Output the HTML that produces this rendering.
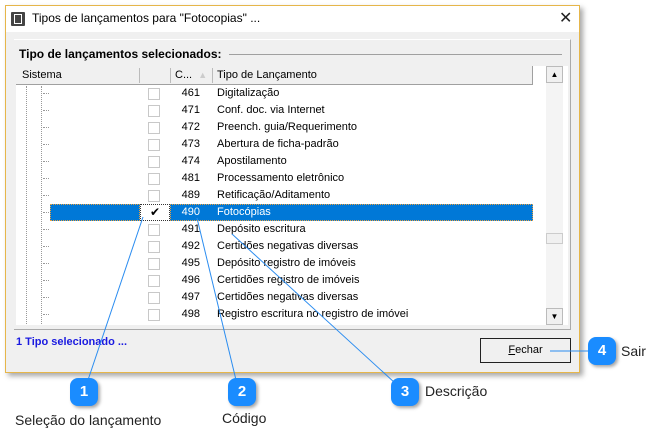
<!DOCTYPE html>
<html><head><meta charset="utf-8"><style>
*{margin:0;padding:0;box-sizing:border-box}
body{width:660px;height:444px;background:#fff;position:relative;font-family:"Liberation Sans",sans-serif;font-size:11px;color:#000;overflow:hidden}
.a{position:absolute}
.win{left:5px;top:5px;width:575px;height:368px;border:1px solid #e6b64a;background:#f0f0f0;box-shadow:3px 3px 5px rgba(0,0,0,.35)}
.tb{left:0;top:0;width:573px;height:26px;background:#fff}
.row{position:absolute;left:0;width:517px;height:17px}
.cb{position:absolute;left:132px;top:3px;width:12px;height:12px;border:1px solid #c8c8c8;background:#fff}
.code{position:absolute;left:155px;width:29px;text-align:right;top:2px}
.desc{position:absolute;left:201px;top:2px}
.tree{position:absolute;left:27px;top:8px;width:6px;border-top:1px dotted #999}
.co{position:absolute;width:28px;height:28px;border-radius:8px;background:#1a8cff;color:#fff;font-weight:bold;font-size:15px;text-align:center;line-height:28px;box-shadow:2px 2px 3px rgba(0,0,0,.35)}
.lbl{position:absolute;font-size:14px;color:#222}
</style></head><body>
<div class="a win">
 <div class="a tb">
  <div class="a" style="left:5px;top:6px;width:14px;height:14px;background:#444;border-radius:1px"><div class="a" style="left:3px;top:2px;width:8px;height:10px;border:1px solid #fff;"></div></div>
  <div class="a" style="left:26px;top:5px;font-size:12px">Tipos de lançamentos para "Fotocopias" ...</div>
  <div class="a" style="left:553px;top:2px;font-size:16px;font-weight:300;color:#222">✕</div>
 </div>
 <div class="a" style="left:8px;top:33px;width:557px;height:291px;border-right:1px solid #aaa;border-bottom:1px solid #aaa;border-top:1px solid #fff">
  <div class="a" style="left:5px;top:7px;font-weight:bold;font-size:12px">Tipo de lançamentos selecionados:</div>
  <div class="a" style="left:215px;top:14px;width:333px;border-top:1px solid #a0a0a0"></div>
  <div class="a" style="left:2px;top:26px;width:552px;height:259px;background:#fff;overflow:hidden">
   <div class="a" style="left:0;top:0;width:517px;height:19px;background:#f0f0f0;border-right:1px solid #a0a0a0;border-bottom:1px solid #a0a0a0">
    <div class="a" style="left:6px;top:3px">Sistema</div>
    <div class="a" style="left:123px;top:2px;height:15px;border-left:1px solid #bbb"></div>
    <div class="a" style="left:154px;top:2px;height:15px;border-left:1px solid #bbb"></div>
    <div class="a" style="left:159px;top:3px">C...&nbsp;&nbsp;<span style="color:#ccc;font-size:9px">▲</span></div>
    <div class="a" style="left:196px;top:2px;height:15px;border-left:1px solid #bbb"></div>
    <div class="a" style="left:201px;top:3px">Tipo de Lançamento</div>
   </div>
   <div class="a" style="left:10px;top:20px;height:240px;border-left:1px dotted #999"></div>
   <div class="a" style="left:25px;top:20px;height:240px;border-left:1px dotted #999"></div>
   <div class="a" style="left:0;top:19px;width:517px">
    <div class="row" style="top:0"><div class="tree"></div><div class="cb"></div><div class="code">461</div><div class="desc">Digitalização</div></div>
    <div class="row" style="top:17px"><div class="tree"></div><div class="cb"></div><div class="code">471</div><div class="desc">Conf. doc. via Internet</div></div>
    <div class="row" style="top:34px"><div class="tree"></div><div class="cb"></div><div class="code">472</div><div class="desc">Preench. guia/Requerimento</div></div>
    <div class="row" style="top:51px"><div class="tree"></div><div class="cb"></div><div class="code">473</div><div class="desc">Abertura de ficha-padrão</div></div>
    <div class="row" style="top:68px"><div class="tree"></div><div class="cb"></div><div class="code">474</div><div class="desc">Apostilamento</div></div>
    <div class="row" style="top:85px"><div class="tree"></div><div class="cb"></div><div class="code">481</div><div class="desc">Processamento eletrônico</div></div>
    <div class="row" style="top:102px"><div class="tree"></div><div class="cb"></div><div class="code">489</div><div class="desc">Retificação/Aditamento</div></div>
    <div class="row" style="top:119px"><div class="tree"></div>
      <div class="a" style="left:34px;top:0;width:90px;height:17px;background:#0078d7;border:1px dotted #e8a040"></div>
      <div class="a" style="left:124px;top:0;width:30px;height:17px;background:#fff;border:1px dotted #333"></div>
      <div class="a" style="left:134px;top:1px;font-size:12px">✔</div>
      <div class="a" style="left:154px;top:0;width:363px;height:17px;background:#0078d7;border:1px dotted #e8a040"></div>
      <div class="code" style="color:#fff">490</div><div class="desc" style="color:#fff">Fotocópias</div></div>
    <div class="row" style="top:136px"><div class="tree"></div><div class="cb"></div><div class="code">491</div><div class="desc">Depósito escritura</div></div>
    <div class="row" style="top:153px"><div class="tree"></div><div class="cb"></div><div class="code">492</div><div class="desc">Certidões negativas diversas</div></div>
    <div class="row" style="top:170px"><div class="tree"></div><div class="cb"></div><div class="code">495</div><div class="desc">Depósito registro de imóveis</div></div>
    <div class="row" style="top:187px"><div class="tree"></div><div class="cb"></div><div class="code">496</div><div class="desc">Certidões registro de imóveis</div></div>
    <div class="row" style="top:204px"><div class="tree"></div><div class="cb"></div><div class="code">497</div><div class="desc">Certidões negativas diversas</div></div>
    <div class="row" style="top:221px"><div class="tree"></div><div class="cb"></div><div class="code">498</div><div class="desc">Registro escritura no registro de imóvei</div></div>
   </div>
   <div class="a" style="left:530px;top:0;width:17px;height:259px;background:#f4f4f4">
    <div class="a" style="left:0;top:0;width:17px;height:17px;background:#f0f0f0;border:1px solid #bbb;font-size:8px;text-align:center;line-height:15px">▲</div>
    <div class="a" style="left:0;top:167px;width:17px;height:11px;background:#f0f0f0;border:1px solid #ccc"></div>
    <div class="a" style="left:0;top:242px;width:17px;height:17px;background:#f0f0f0;border:1px solid #bbb;font-size:8px;text-align:center;line-height:15px">▼</div>
   </div>
  </div>
 </div>
 <div class="a" style="left:10px;top:330px;color:#1a1ae0;font-weight:bold">1 Tipo selecionado ...</div>
 <div class="a" style="left:474px;top:332px;width:91px;height:25px;border:1px solid #222;background:#f0f0f0;text-align:center;line-height:23px"><u>F</u>echar</div>
</div>
<svg class="a" style="left:0;top:0" width="660" height="444"><g stroke="#2a8cf0" stroke-width="1" fill="none">
<line x1="88" y1="380" x2="143" y2="217"/><line x1="236" y1="380" x2="197" y2="218"/><line x1="395" y1="383" x2="232" y2="234"/><line x1="590" y1="351" x2="550" y2="351"/></g></svg>
<div class="co" style="left:70px;top:378px">1</div>
<div class="co" style="left:228px;top:378px">2</div>
<div class="co" style="left:391px;top:378px">3</div>
<div class="co" style="left:588px;top:337px">4</div>
<div class="lbl" style="left:15px;top:412px">Seleção do lançamento</div>
<div class="lbl" style="left:222px;top:410px">Código</div>
<div class="lbl" style="left:425px;top:383px">Descrição</div>
<div class="lbl" style="left:621px;top:343px">Sair</div>
</body></html>
